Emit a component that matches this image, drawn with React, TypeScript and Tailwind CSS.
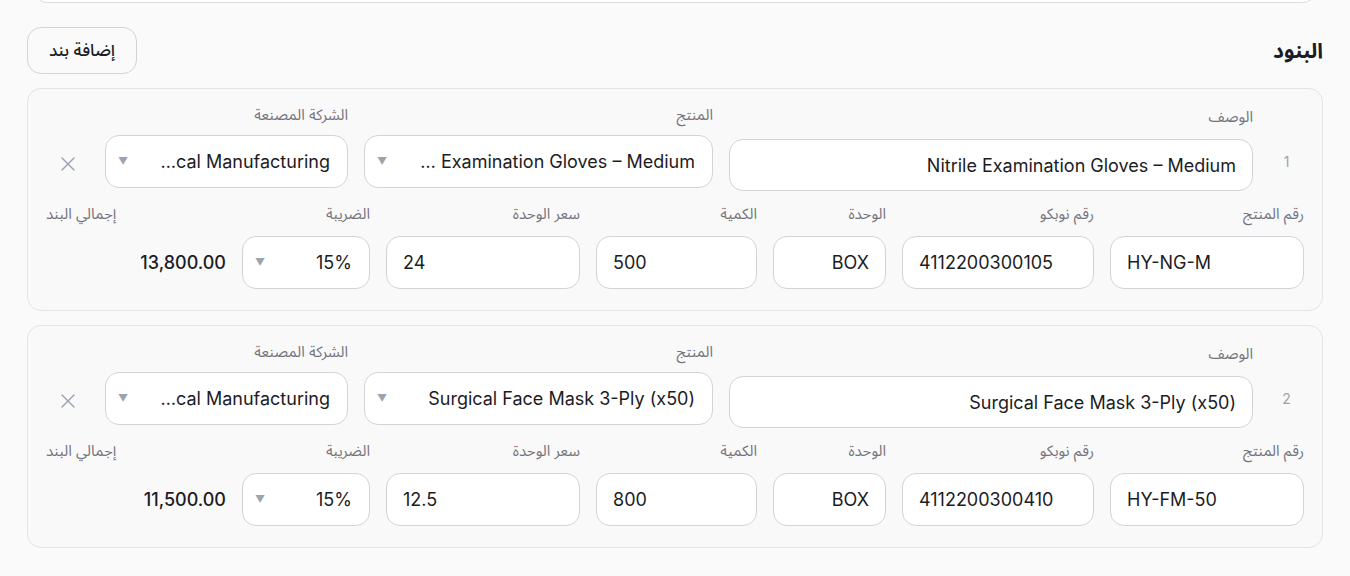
import { X } from "lucide-react";

type Item = {
  n: number;
  desc: string;
  product: string;
  maker: string;
  sku: string;
  nupco: string;
  unit: string;
  qty: string;
  price: string;
  tax: string;
  total: string;
};

const items: Item[] = [
  {
    n: 1,
    desc: "Nitrile Examination Gloves – Medium",
    product: "Nitrile Examination Gloves – Medium",
    maker: "Hayat Medical Manufacturing",
    sku: "HY-NG-M",
    nupco: "4112200300105",
    unit: "BOX",
    qty: "500",
    price: "24",
    tax: "15%",
    total: "13,800.00",
  },
  {
    n: 2,
    desc: "Surgical Face Mask 3-Ply (x50)",
    product: "Surgical Face Mask 3-Ply (x50)",
    maker: "Hayat Medical Manufacturing",
    sku: "HY-FM-50",
    nupco: "4112200300410",
    unit: "BOX",
    qty: "800",
    price: "12.5",
    tax: "15%",
    total: "11,500.00",
  },
];

function Label({ children, gap = "mb-[13px]" }: { children: React.ReactNode; gap?: string }) {
  return <div className={`text-[15px] leading-[18px] text-[#74747c] ${gap}`}>{children}</div>;
}

function Field({ value, ltr, h = "h-[53px]" }: { value: string; ltr?: boolean; h?: string }) {
  return (
    <input
      readOnly
      value={value}
      dir={ltr ? "ltr" : "rtl"}
      className={`w-full ${h} rounded-[14px] border border-[#d4d4d8] bg-white px-4 text-[18px] text-[#1c1c24] outline-none`}
    />
  );
}

function Select({ value }: { value: string }) {
  return (
    <div className="flex h-[53px] items-center gap-[31px] rounded-[14px] border border-[#d4d4d8] bg-white pl-3 pr-[17px] text-[18px] text-[#1c1c24]">
      <span className="min-w-0 flex-1 truncate text-right">{value}</span>
      <span className="text-[10px] text-[#9ca3af]">▼</span>
    </div>
  );
}

function ItemCard({ item }: { item: Item }) {
  return (
    <div className="rounded-[14px] border border-[#e4e4e7] bg-[#f9f9fa] px-[18px] pt-[17px] pb-[21px]">
      <div className="flex items-start gap-4">
        <div className="w-[35px] pt-[46px] text-center text-[14px] leading-[20px] text-[#9ca3af]">{item.n}</div>
        <div className="w-[524px] pt-[2px]">
          <Label>الوصف</Label>
          <Field value={item.desc} h="h-[52px]" />
        </div>
        <div className="w-[349px]">
          <Label gap="mb-[11px]">المنتج</Label>
          <Select value={item.product} />
        </div>
        <div className="w-[243px]">
          <Label gap="mb-[11px]">الشركة المصنعة</Label>
          <Select value={item.maker} />
        </div>
        <div className="flex flex-1 justify-center pt-[46px]">
          <X size={24} strokeWidth={1.4} className="text-[#9ca3af]" />
        </div>
      </div>

      <div className="mt-[14px] flex items-start gap-4">
        <div className="w-[194px]">
          <Label>رقم المنتج</Label>
          <Field value={item.sku} ltr />
        </div>
        <div className="w-[192px]">
          <Label>رقم نوبكو</Label>
          <Field value={item.nupco} ltr />
        </div>
        <div className="w-[113px]">
          <Label>الوحدة</Label>
          <Field value={item.unit} />
        </div>
        <div className="w-[161px]">
          <Label>الكمية</Label>
          <Field value={item.qty} ltr />
        </div>
        <div className="w-[194px]">
          <Label>سعر الوحدة</Label>
          <Field value={item.price} ltr />
        </div>
        <div className="w-[128px]">
          <Label>الضريبة</Label>
          <Select value={item.tax} />
        </div>
        <div className="flex-1">
          <Label>
            <div className="text-left">إجمالي البند</div>
          </Label>
          <div className="flex h-[53px] items-center text-[18px] font-medium text-[#1c1c24]">{item.total}</div>
        </div>
      </div>
    </div>
  );
}

export default function App() {
  return (
    <div
      dir="rtl"
      className="min-h-screen overflow-hidden bg-[#fafafa] px-[27px] pb-10 font-[family-name:Inter,'Noto_Sans_Arabic','DejaVu_Sans',sans-serif]"
    >
      {/* tail of the section above */}
      <div className="mx-2 -mt-[20px] h-[23px] rounded-[14px] border border-[#dcdce0] bg-white" />

      <div className="mt-[24px] flex items-center justify-between">
        <h2 className="text-[21px] font-bold text-[#1c1c24]">البنود</h2>
        <button className="h-[47px] w-[110px] rounded-[14px] border border-[#d4d4d8] bg-[#fafafa] text-[17px] font-medium text-[#1c1c24]">
          إضافة بند
        </button>
      </div>

      <div className="mt-[14px] flex flex-col gap-[14px]">
        {items.map((item) => (
          <ItemCard key={item.n} item={item} />
        ))}
      </div>
    </div>
  );
}
